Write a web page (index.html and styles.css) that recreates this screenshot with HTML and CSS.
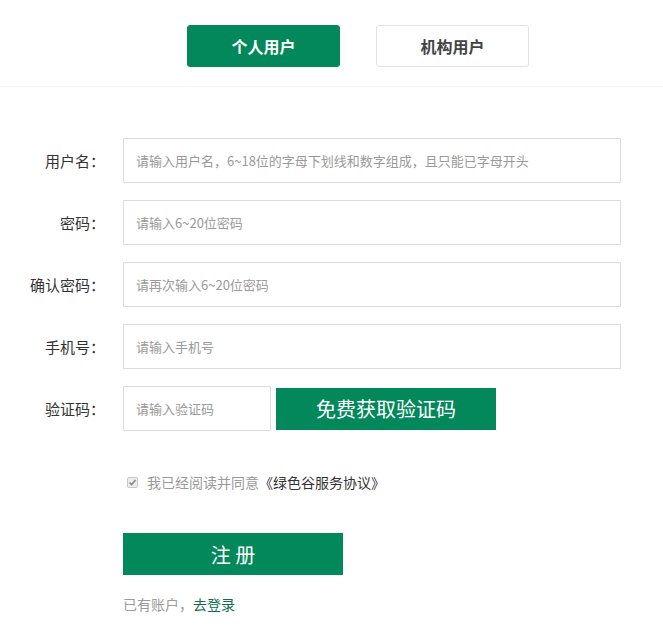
FILE: index.html
```html
<!DOCTYPE html>
<html lang="zh-CN">
<head>
<meta charset="utf-8">
<title>注册</title>
<link rel="stylesheet" href="styles.css">
</head>
<body>
<div class="header">
  <div class="tab tab-active">个人用户</div>
  <div class="tab">机构用户</div>
</div>
<form class="form">
  <div class="row">
    <label class="label">用户名：</label>
    <input class="input" type="text" placeholder="请输入用户名，6~18位的字母下划线和数字组成，且只能已字母开头">
  </div>
  <div class="row">
    <label class="label">密码：</label>
    <input class="input" type="password" placeholder="请输入6~20位密码">
  </div>
  <div class="row">
    <label class="label">确认密码：</label>
    <input class="input" type="password" placeholder="请再次输入6~20位密码">
  </div>
  <div class="row">
    <label class="label">手机号：</label>
    <input class="input" type="text" placeholder="请输入手机号">
  </div>
  <div class="row">
    <label class="label">验证码：</label>
    <input class="input input-code" type="text" placeholder="请输入验证码">
    <button type="button" class="btn-code">免费获取验证码</button>
  </div>
  <div class="agree">
    <span class="check"><svg width="9" height="9" viewBox="0 0 9 9"><path d="M1.5 4.6 L3.6 6.6 L7.6 2" fill="none" stroke="#8a8a8a" stroke-width="1.6"/></svg></span>
    <span class="agree-text">我已经阅读并同意</span><span class="agree-link">《绿色谷服务协议》</span>
  </div>
  <button type="button" class="btn-submit">注 册</button>
  <div class="login">已有账户，<a class="login-link" href="#">去登录</a></div>
</form>
</body>
</html>
```
FILE: styles.css
```css
* { box-sizing: border-box; }
body {
  margin: 0;
  background: #fff;
  font-family: "Noto Sans CJK SC", "Liberation Sans", sans-serif;
  color: #333;
}
.header {
  height: 87px;
  border-bottom: 1px solid #f2f2f2;
  display: flex;
  gap: 36px;
  padding: 25px 0 0 187px;
}
.tab {
  width: 153px;
  height: 42px;
  border: 1px solid #e3e3e3;
  border-radius: 3px;
  display: flex;
  align-items: center;
  justify-content: center;
  font-size: 16px;
  font-weight: bold;
  color: #444;
}
.tab-active {
  background: #02885a;
  border-color: #02885a;
  color: #fff;
}
.form {
  padding-top: 51px;
  display: flex;
  flex-direction: column;
}
.row {
  display: flex;
  align-items: center;
  height: 45px;
  margin-bottom: 17px;
}
.label {
  width: 105px;
  text-align: right;
  font-size: 15px;
  color: #333;
  margin-right: 18px;
}
.input {
  width: 498px;
  height: 45px;
  border: 1px solid #dcdcdc;
  padding: 0 12px;
  font-size: 13px;
  font-family: inherit;
  outline: none;
  color: #333;
}
.input::placeholder { color: #9a9a9a; }
.input-code { width: 148px; }
.btn-code {
  margin-left: 5px;
  width: 220px;
  height: 42px;
  border: none;
  background: #02885a;
  color: #fff;
  font-size: 20px;
  font-family: inherit;
}
.agree {
  margin: 24px 0 0 127px;
  display: flex;
  align-items: center;
  font-size: 14px;
  height: 20px;
}
.check {
  width: 11px;
  height: 11px;
  border: 1px solid #c8c8c8;
  border-radius: 2px;
  background: #ececec;
  display: flex;
  align-items: center;
  justify-content: center;
  margin-right: 9px;
}
.agree-text { color: #9a9a9a; }
.agree-link { color: #333; }
.btn-submit {
  margin: 41px 0 0 123px;
  width: 220px;
  height: 42px;
  border: none;
  background: #02885a;
  color: #fff;
  font-size: 20px;
  font-family: inherit;
}
.login {
  margin: 19px 0 0 123px;
  font-size: 14px;
  color: #9a9a9a;
}
.login-link {
  color: #0d6d4a;
  text-decoration: none;
}
```
